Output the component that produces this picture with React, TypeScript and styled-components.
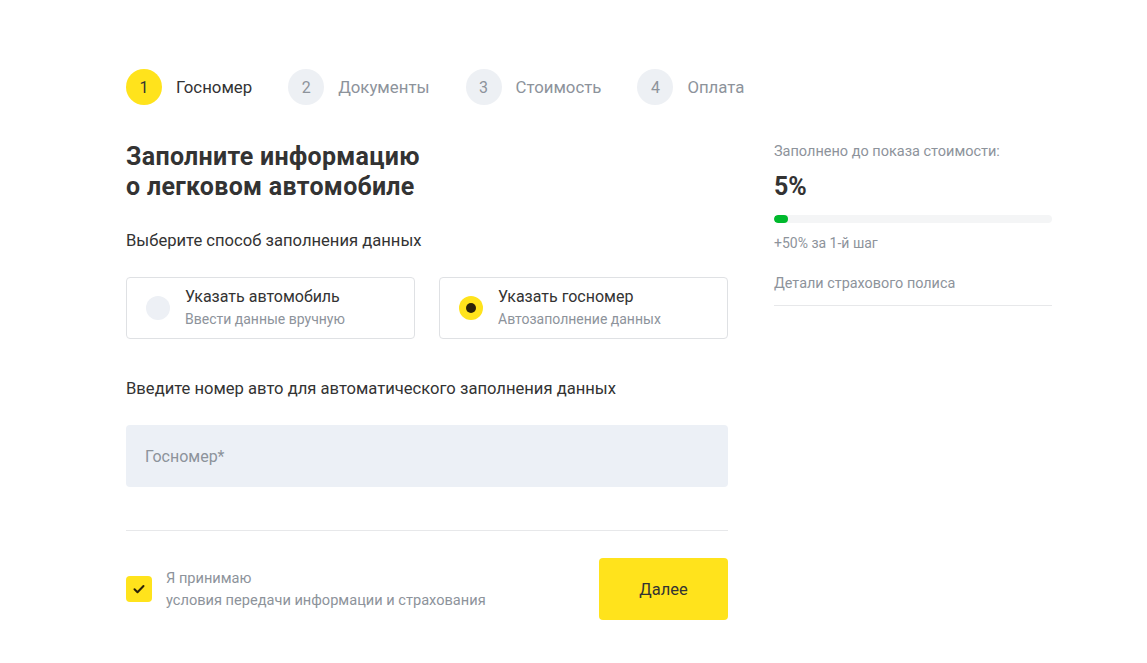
import styled, { createGlobalStyle } from "styled-components";

const GlobalStyle = createGlobalStyle`
  body {
    margin: 0;
    background: #fff;
    font-family: Roboto, "Liberation Sans", Arial, sans-serif;
    color: #333;
  }
`;

const yellow = "#ffe31c";

const Page = styled.div`
  padding: 69px 0 0 126px;
`;

const Steps = styled.div`
  display: flex;
  align-items: center;
  gap: 36px;
`;

const Step = styled.div`
  display: flex;
  align-items: center;
  gap: 14px;
`;

const StepNumber = styled.div<{ $active?: boolean }>`
  width: 36px;
  height: 36px;
  border-radius: 50%;
  display: flex;
  align-items: center;
  justify-content: center;
  font-size: 16px;
  background: ${p => (p.$active ? yellow : "#edf0f4")};
  color: ${p => (p.$active ? "#333" : "#8d939b")};
`;

const StepLabel = styled.span<{ $active?: boolean }>`
  font-size: 16.8px;
  color: ${p => (p.$active ? "#333" : "#8d939b")};
`;

const Columns = styled.div`
  display: flex;
  gap: 46px;
  margin-top: 37px;
`;

const Main = styled.div`
  width: 602px;
`;

const Title = styled.h1`
  margin: 0;
  font-size: 25px;
  line-height: 30px;
  font-weight: 700;
  letter-spacing: 0.3px;
  color: #333;
`;

const Label = styled.div<{ $top: number }>`
  margin-top: ${p => p.$top}px;
  font-size: 16.6px;
  line-height: 24px;
  color: #333;
`;

const Options = styled.div`
  display: grid;
  grid-template-columns: 1fr 1fr;
  gap: 24px;
  margin-top: 24px;
`;

const Option = styled.div`
  height: 62px;
  box-sizing: border-box;
  border: 1px solid #dfe1e4;
  border-radius: 4px;
  display: flex;
  align-items: center;
  gap: 15px;
  padding-left: 19px;
`;

const Radio = styled.div<{ $checked?: boolean }>`
  width: 24px;
  height: 24px;
  flex-shrink: 0;
  border-radius: 50%;
  background: ${p => (p.$checked ? yellow : "#edf0f5")};
  display: flex;
  align-items: center;
  justify-content: center;

  &::after {
    content: "";
    display: ${p => (p.$checked ? "block" : "none")};
    width: 10px;
    height: 10px;
    border-radius: 50%;
    background: #2b2209;
  }
`;

const OptionText = styled.div`
  display: flex;
  flex-direction: column;
  gap: 2px;
`;

const OptionTitle = styled.span`
  font-size: 16px;
  line-height: 20px;
  color: #333;
`;

const OptionHint = styled.span`
  font-size: 14px;
  line-height: 20px;
  color: #8d939b;
`;

const Input = styled.input`
  display: block;
  width: 100%;
  height: 62px;
  box-sizing: border-box;
  margin-top: 24px;
  border: none;
  border-radius: 4px;
  background: #ecf0f6;
  padding: 0 19px;
  font-family: inherit;
  font-size: 16px;
  color: #333;
  outline: none;

  &::placeholder {
    color: #8d939b;
  }
`;

const Divider = styled.hr`
  margin: 43px 0 0;
  border: none;
  border-top: 1px solid #e7e8ea;
`;

const Footer = styled.div`
  display: flex;
  align-items: center;
  justify-content: space-between;
  margin-top: 27px;
`;

const Agreement = styled.label`
  display: flex;
  align-items: center;
  gap: 14px;
`;

const Checkbox = styled.div`
  width: 26px;
  height: 26px;
  border-radius: 4px;
  background: ${yellow};
  display: flex;
  align-items: center;
  justify-content: center;
`;

const AgreementText = styled.div`
  font-size: 14.6px;
  line-height: 22px;
  color: #8d939b;
`;

const NextButton = styled.button`
  width: 129px;
  height: 62px;
  border: none;
  border-radius: 4px;
  background: ${yellow};
  font-family: inherit;
  font-size: 16.5px;
  color: #333;
  cursor: pointer;
`;

const Aside = styled.div`
  width: 278px;
`;

const AsideCaption = styled.div`
  font-size: 14.5px;
  line-height: 20px;
  color: #8d939b;
`;

const Percent = styled.div`
  margin-top: 11px;
  font-size: 25px;
  line-height: 28px;
  font-weight: 700;
  color: #333;
`;

const Track = styled.div`
  margin-top: 14px;
  height: 8px;
  border-radius: 4px;
  background: #f4f5f6;
  overflow: hidden;
`;

const Fill = styled.div`
  height: 100%;
  border-radius: 4px;
  background: #00b92d;
`;

const StepBonus = styled.div`
  margin-top: 11px;
  font-size: 14px;
  line-height: 18px;
  color: #8d939b;
`;

const Details = styled.div`
  margin-top: 22px;
  padding-bottom: 11px;
  border-bottom: 1px solid #e7e8ea;
  font-size: 14.4px;
  line-height: 20px;
  color: #8d939b;
`;

const steps = ["Госномер", "Документы", "Стоимость", "Оплата"];

const App = () => {
  const progress = 5;

  return (
    <>
      <GlobalStyle />
      <Page>
        <Steps>
          {steps.map((name, i) => (
            <Step key={name}>
              <StepNumber $active={i === 0}>{i + 1}</StepNumber>
              <StepLabel $active={i === 0}>{name}</StepLabel>
            </Step>
          ))}
        </Steps>

        <Columns>
          <Main>
            <Title>
              Заполните информацию
              <br />
              о легковом автомобиле
            </Title>

            <Label $top={27}>Выберите способ заполнения данных</Label>

            <Options>
              <Option>
                <Radio />
                <OptionText>
                  <OptionTitle>Указать автомобиль</OptionTitle>
                  <OptionHint>Ввести данные вручную</OptionHint>
                </OptionText>
              </Option>
              <Option>
                <Radio $checked />
                <OptionText>
                  <OptionTitle>Указать госномер</OptionTitle>
                  <OptionHint>Автозаполнение данных</OptionHint>
                </OptionText>
              </Option>
            </Options>

            <Label $top={38}>Введите номер авто для автоматического заполнения данных</Label>

            <Input placeholder="Госномер*" />

            <Divider />

            <Footer>
              <Agreement>
                <Checkbox>
                  <svg width="14" height="14" viewBox="0 0 14 14" fill="none">
                    <path d="M2.5 7.2l3 3 6-6.2" stroke="#2b2209" strokeWidth="2" strokeLinecap="round" strokeLinejoin="round" />
                  </svg>
                </Checkbox>
                <AgreementText>
                  Я принимаю
                  <br />
                  условия передачи информации и страхования
                </AgreementText>
              </Agreement>
              <NextButton>Далее</NextButton>
            </Footer>
          </Main>

          <Aside>
            <AsideCaption>Заполнено до показа стоимости:</AsideCaption>
            <Percent>{progress}%</Percent>
            <Track>
              <Fill style={{ width: `${progress}%` }} />
            </Track>
            <StepBonus>+50% за 1-й шаг</StepBonus>
            <Details>Детали страхового полиса</Details>
          </Aside>
        </Columns>
      </Page>
    </>
  );
};

export default App;
